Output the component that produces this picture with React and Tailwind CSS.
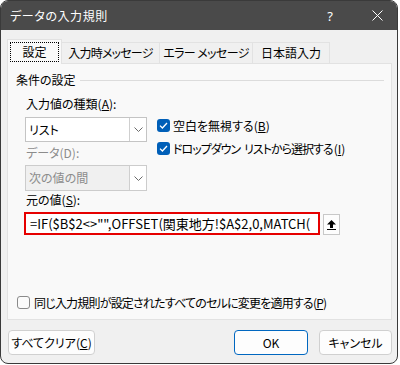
import React from "react";

const jp = "font-['Noto_Sans_CJK_JP','Noto_Sans',sans-serif] [font-feature-settings:'palt']";

function Chevron() {
  return (
    <svg width="9" height="5" viewBox="0 0 9 5" className="block">
      <path d="M0.5 0.5 L4.5 4.5 L8.5 0.5" fill="none" stroke="#6b6b6b" strokeWidth="1" />
    </svg>
  );
}

function Check({ checked }) {
  if (!checked) {
    return <div className="w-[13px] h-[13px] rounded-[3px] border border-[#8a8a8a] bg-[#fbfbfb] shrink-0" />;
  }
  return (
    <div className="w-[13px] h-[13px] rounded-[3px] bg-[#005fb8] flex items-center justify-center shrink-0">
      <svg width="9" height="7" viewBox="0 0 9 7">
        <path d="M1 3.6 L3.4 6 L8 1" fill="none" stroke="#fff" strokeWidth="1.3" />
      </svg>
    </div>
  );
}

function Select({ value, disabled }) {
  return (
    <div
      className={
        "flex border " +
        (disabled ? "h-[26px] border-[#cccccc] bg-[#f0f0f0] text-[#8c8c8c]" : "h-[25px] border-[#c4c4c4] bg-white text-black")
      }
    >
      <div className="flex-1 flex items-center pl-[3px] text-[12px]">{value}</div>
      <div className="w-[17px] border-l border-[#cfcfcf] bg-white flex items-center justify-center">
        <Chevron />
      </div>
    </div>
  );
}

function Tab({ label, w }) {
  return (
    <div className={"h-[21px] border border-b-0 border-[#e2e2e2] bg-[#f0f0f0] flex items-center justify-center text-[12px] text-black " + w}>
      {label}
    </div>
  );
}

export default function App() {
  return (
    <div className={"w-[400px] h-[365px] bg-white text-[12px] leading-[16px] text-[#1a1a1a] " + jp}>
      <div className="w-[398px] h-[364px] rounded-[8px] border border-[#3a3a3a] overflow-hidden flex flex-col bg-[#f0f0f0]">
        {/* title bar */}
        <div className="h-[29px] bg-[#4a4a4a] flex items-center pl-[9px] text-white text-[12px] shrink-0">
          <span className="tracking-[0.6px]">データの入力規則</span>
          <span className="ml-auto w-[12px] text-center text-[13px] font-['Noto_Sans',sans-serif]">?</span>
          <svg width="11" height="11" viewBox="0 0 11 11" className="ml-[36px] mr-[14px]">
            <path d="M0.5 0.5 L10.5 10.5 M10.5 0.5 L0.5 10.5" stroke="#fff" strokeWidth="1" />
          </svg>
        </div>

        <div className="flex-1 pl-[6px] pt-[9px] flex flex-col">
          {/* tabs */}
          <div className="flex items-end h-[24px] relative z-10">
            <div className="w-[55px] h-[25px] border border-b-0 border-[#e2e2e2] bg-[#f9f9f9] p-[2px] -mb-px">
              <div className="h-full border border-dotted border-black flex items-center justify-center text-[12px] text-black">
                設定
              </div>
            </div>
            <Tab label={<span className="tracking-[-0.8px]">入力時メッセージ</span>} w="w-[98px] border-l-0" />
            <Tab label={<span className="tracking-[-0.6px]">エラー メッセージ</span>} w="w-[93px] border-l-0" />
            <Tab label="日本語入力" w="w-[77px] border-l-0" />
          </div>

          {/* panel */}
          <div className="w-[385px] h-[257px] border border-[#e2e2e2] bg-[#f9f9f9] flex flex-col">
            <div className="mt-[8px] h-[16px] flex items-center">
              <span className="ml-[8px] text-black">条件の設定</span>
              <div className="flex-1 h-px bg-[#dcdcdc] ml-[4px] mr-[7px]" />
            </div>

            <div className="pl-[17px]">
              <div className="mt-[8px] pl-[1px] text-black">入力値の種類(<u>A</u>):</div>
              <div className="flex mt-[5px]">
                <div className="w-[122px]">
                  <Select value="リスト" />
                  <div className="mt-[3px] pl-[1px] text-[#8c8c8c]">データ(D):</div>
                  <div className="mt-[4px]">
                    <Select value="次の値の間" disabled />
                  </div>
                </div>
                <div className="ml-[10px] pt-[2px] flex flex-col gap-[10px]">
                  <div className="flex items-center gap-[3px] h-[13px]">
                    <Check checked />
                    <span className="text-black">空白を無視する(<u>B</u>)</span>
                  </div>
                  <div className="flex items-center gap-[3px] h-[13px]">
                    <Check checked />
                    <span className="text-black whitespace-nowrap">
                      <span className="tracking-[-1px]">ドロップダウン</span>
                      <span className="inline-block w-[4px]" />
                      <span className="tracking-[-1px]">リストから選択する</span>
                      <span className="ml-[1px]">(<u>I</u>)</span>
                    </span>
                  </div>
                </div>
              </div>
              <div className="mt-[1px] pl-[1px] text-black">元の値(<u>S</u>):</div>
              <div className="flex items-start mt-[4px] -ml-px">
                <div className="w-[296px] h-[23px] border-2 border-[#e60000] bg-white flex items-center pl-[4px] overflow-hidden whitespace-nowrap text-[13px] text-black [font-feature-settings:normal]">
                  =IF($B$2&lt;&gt;"",OFFSET(関東地方!$A$2,0,MATCH(
                </div>
                <div className="ml-[3px] mt-[2px] w-[17px] h-[21px] border border-[#c8c8c8] bg-[#fdfdfd] flex items-center justify-center">
                  <svg width="9" height="10" viewBox="0 0 9 10">
                    <path d="M4.5 0 L9 4.5 L6 4.5 L6 8 L3 8 L3 4.5 L0 4.5 Z" fill="#000" />
                    <rect x="0" y="9" width="9" height="1" fill="#000" />
                  </svg>
                </div>
              </div>
            </div>

            <div className="mt-[61px] ml-[9px] flex items-center gap-[4px] h-[13px]">
              <Check />
              <span className="text-black tracking-[-0.8px]">同じ入力規則が設定されたすべてのセルに変更を適用する(<u>P</u>)</span>
            </div>
          </div>

          {/* buttons */}
          <div className="flex mt-[10px] pr-[5px]">
            <button className="ml-px w-[87px] h-[25px] rounded-[4px] border border-[#d0d0d0] bg-[#fdfdfd] text-[12px] text-black">
              すべてクリア(<u>C</u>)
            </button>
            <button className="ml-auto w-[74px] h-[25px] rounded-[4px] border border-[#0067c0] bg-[#fdfdfd] text-[12px] text-black">
              OK
            </button>
            <button className="ml-[11px] w-[73px] h-[25px] rounded-[4px] border border-[#d0d0d0] bg-[#fdfdfd] text-[12px] text-black">
              キャンセル
            </button>
          </div>
        </div>
      </div>
    </div>
  );
}
